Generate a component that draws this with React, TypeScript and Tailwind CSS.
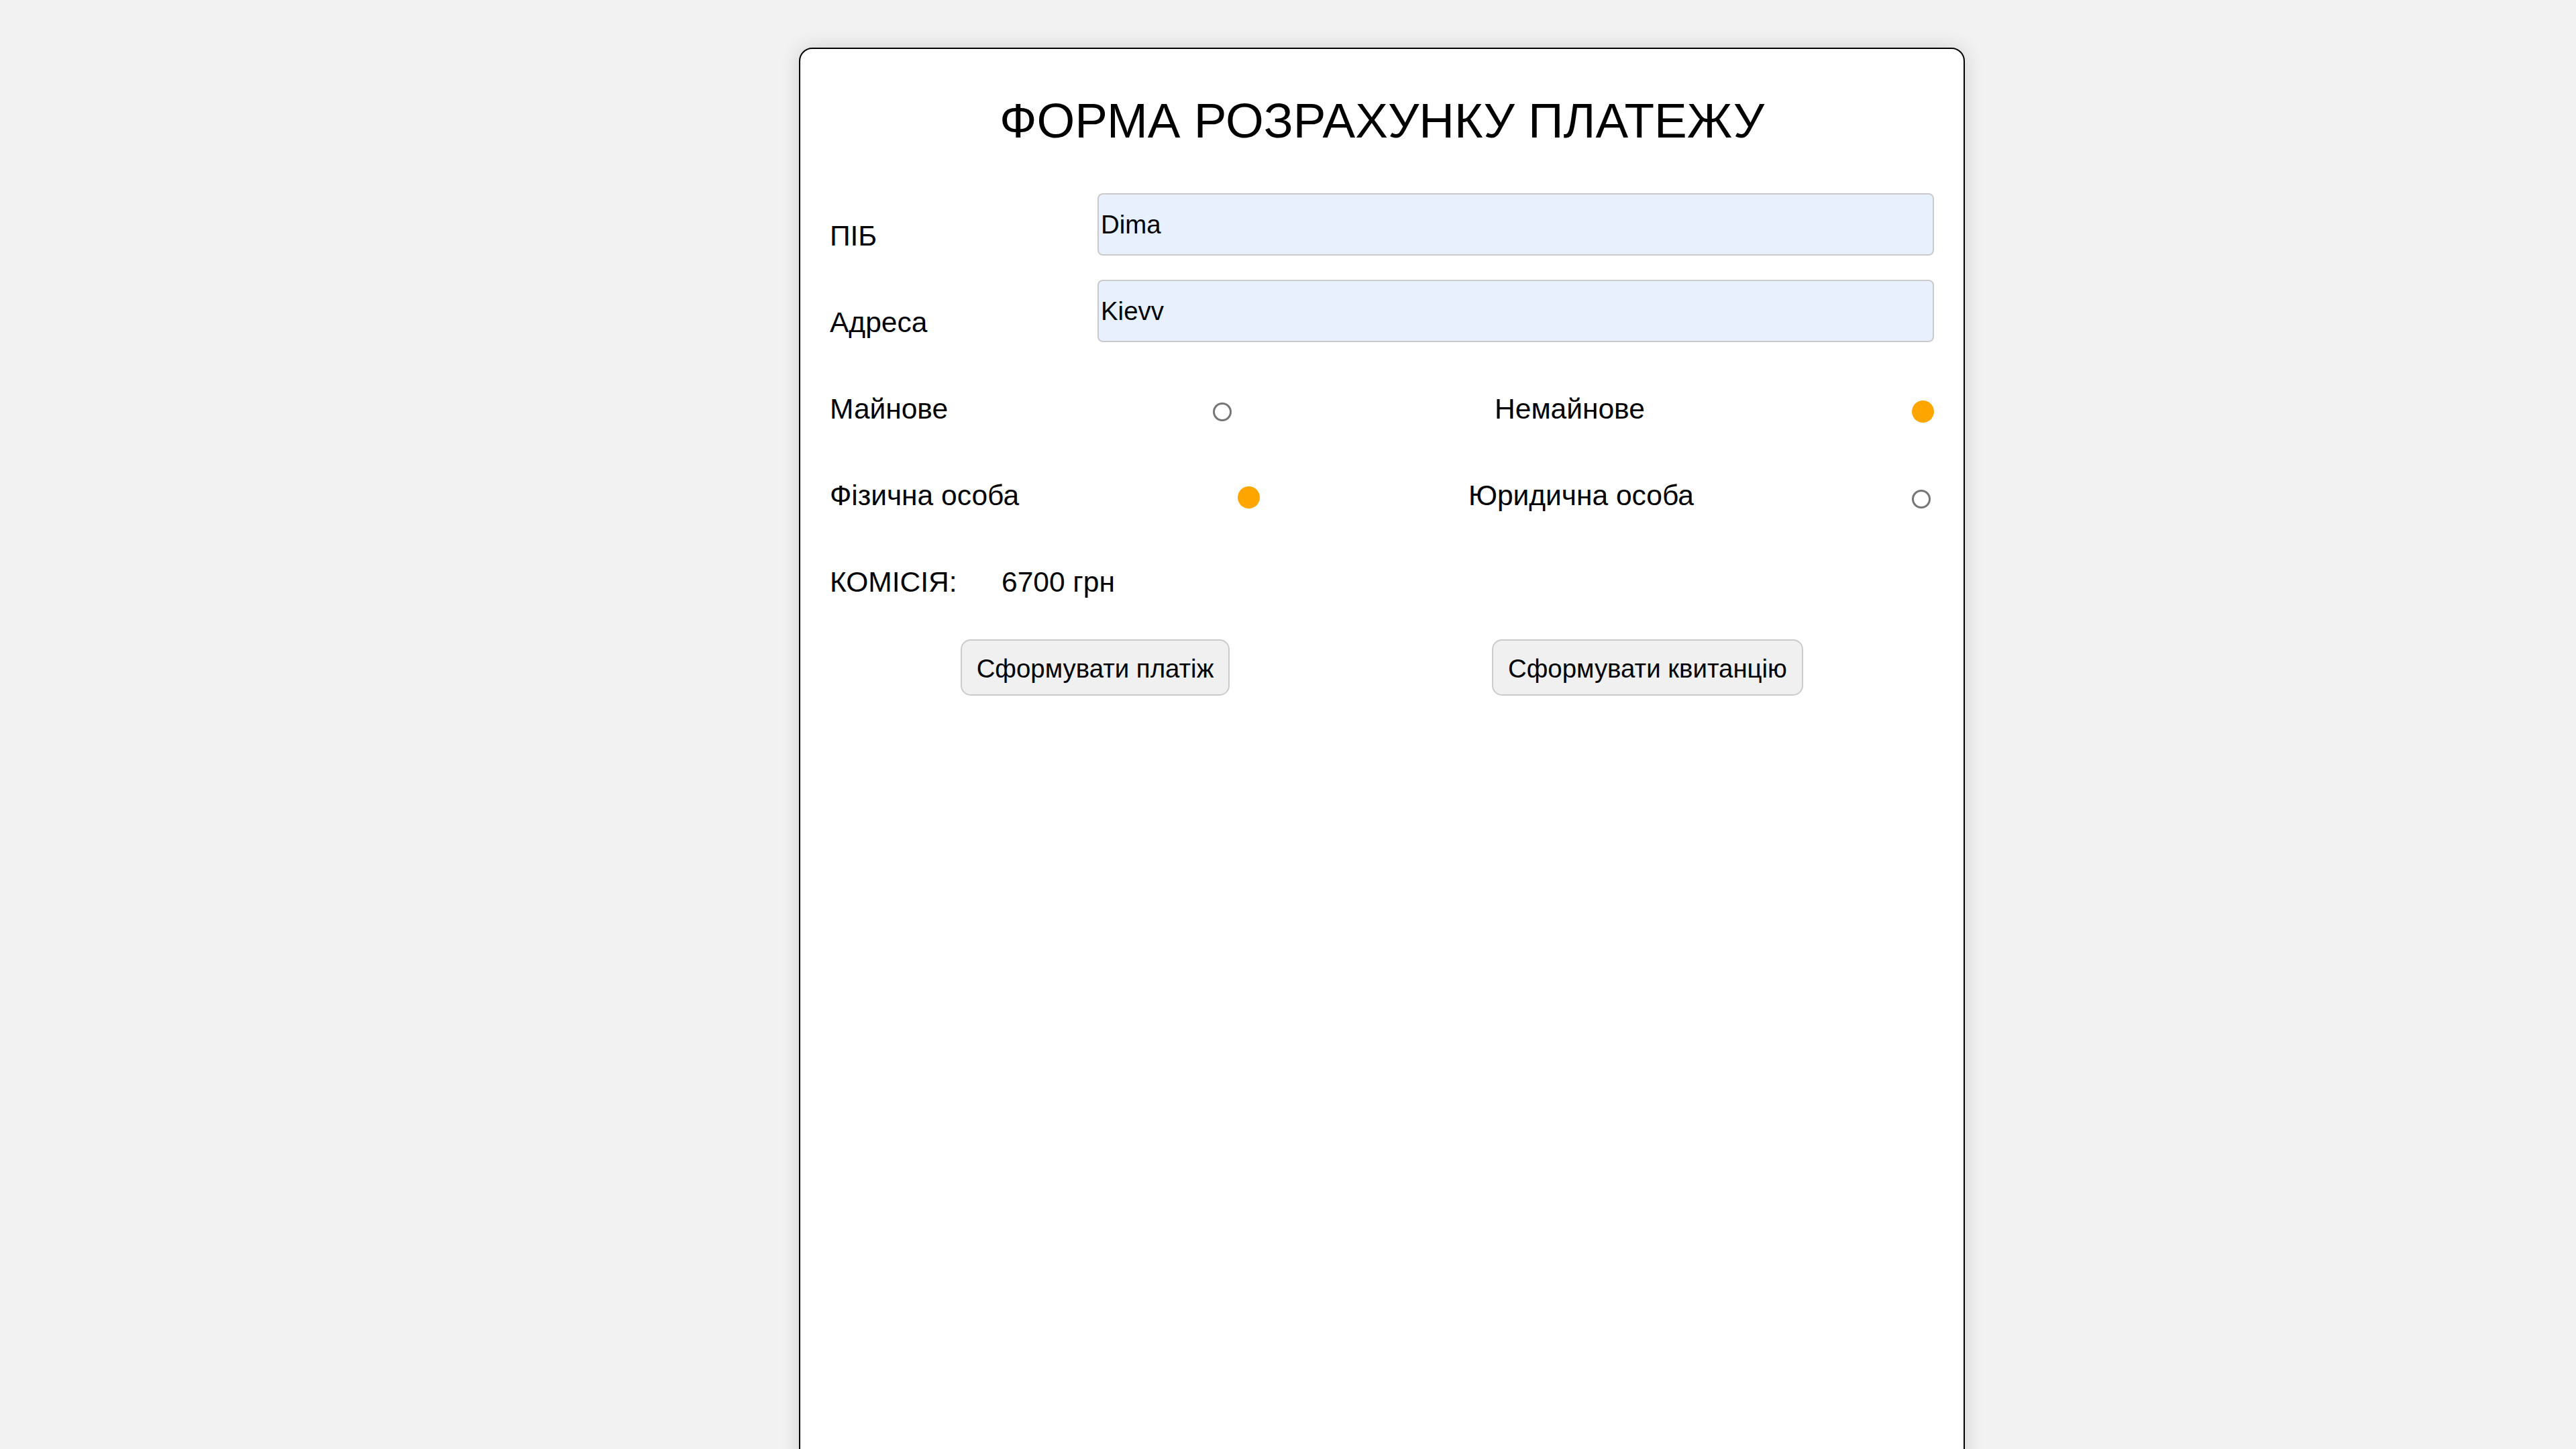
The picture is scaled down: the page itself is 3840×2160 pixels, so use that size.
import React from "react";

const font = { fontFamily: '"Liberation Sans", Arial, sans-serif' };

function Radio({ checked, className }: { checked?: boolean; className?: string }) {
  return checked ? (
    <span className={"block shrink-0 rounded-full bg-[#ffa500] w-[33px] h-[33px] " + (className ?? "")} />
  ) : (
    <span className={"block shrink-0 rounded-full bg-white border-[3px] border-[#767676] w-[28px] h-[28px] " + (className ?? "")} />
  );
}

export default function App() {
  return (
    <div
      className="h-[2160px] w-full overflow-hidden bg-[#f2f2f2] text-black font-['Liberation_Sans',Arial,sans-serif]"
      style={font}
    >
      <div className="ml-[1191px] mt-[71px] w-[1738px] h-[2200px] bg-white border-2 border-black rounded-[20px] shadow-[0_0_30px_rgba(0,0,0,0.14)] px-[44px]">
        <h1 className="mt-[71px] text-center text-[73px] leading-[72px] font-normal">
          ФОРМА РОЗРАХУНКУ ПЛАТЕЖУ
        </h1>

        <div className="flex items-start mt-[72px]">
          <div className="w-[399px] mt-[43px] text-[42.5px] leading-[42px]">ПІБ</div>
          <input
            className="w-[1247px] h-[93px] px-[3px] border-2 border-[#cacaca] rounded-[8px] bg-[#e8f0fe] text-[38.4px] outline-none"
            style={font}
            defaultValue="Dima"
          />
        </div>

        <div className="flex items-start mt-[36px]">
          <div className="w-[399px] mt-[43px] text-[42.5px] leading-[42px]">Адреса</div>
          <input
            className="w-[1247px] h-[93px] px-[3px] border-2 border-[#cacaca] rounded-[8px] bg-[#e8f0fe] text-[38.4px] outline-none"
            style={font}
            defaultValue="Kievv"
          />
        </div>

        <div className="flex items-start mt-[77px] h-[42px]">
          <div className="w-[572px] pt-[2px] text-[42.5px] leading-[42px]">Майнове</div>
          <Radio className="mt-[13px]" />
          <div className="ml-[392px] w-[623px] pt-[2px] text-[42.5px] leading-[42px]">Немайнове</div>
          <Radio checked className="mt-[10px]" />
        </div>

        <div className="flex items-start mt-[88px] h-[42px]">
          <div className="w-[608px] pt-[1px] text-[42.5px] leading-[42px]">Фізична особа</div>
          <Radio checked className="mt-[8px]" />
          <div className="ml-[311px] w-[661px] pt-[1px] text-[42.5px] leading-[42px]">Юридична особа</div>
          <Radio className="mt-[13px]" />
        </div>

        <div className="flex items-start mt-[88px] h-[42px] text-[42.5px] leading-[42px]">
          <div className="w-[256px]">КОМІСІЯ:</div>
          <div>6700 грн</div>
        </div>

        <div className="flex items-start mt-[64px]">
          <button
            className="ml-[195px] w-[401px] h-[84px] pt-[4px] border-2 border-[#cbcbcb] bg-[#f0f0f0] rounded-[15px] text-[38.4px] text-black"
            style={font}
          >
            Сформувати платіж
          </button>
          <button
            className="ml-[391px] w-[464px] h-[84px] pt-[4px] border-2 border-[#cbcbcb] bg-[#f0f0f0] rounded-[15px] text-[38.4px] text-black"
            style={font}
          >
            Сформувати квитанцію
          </button>
        </div>
      </div>
    </div>
  );
}
